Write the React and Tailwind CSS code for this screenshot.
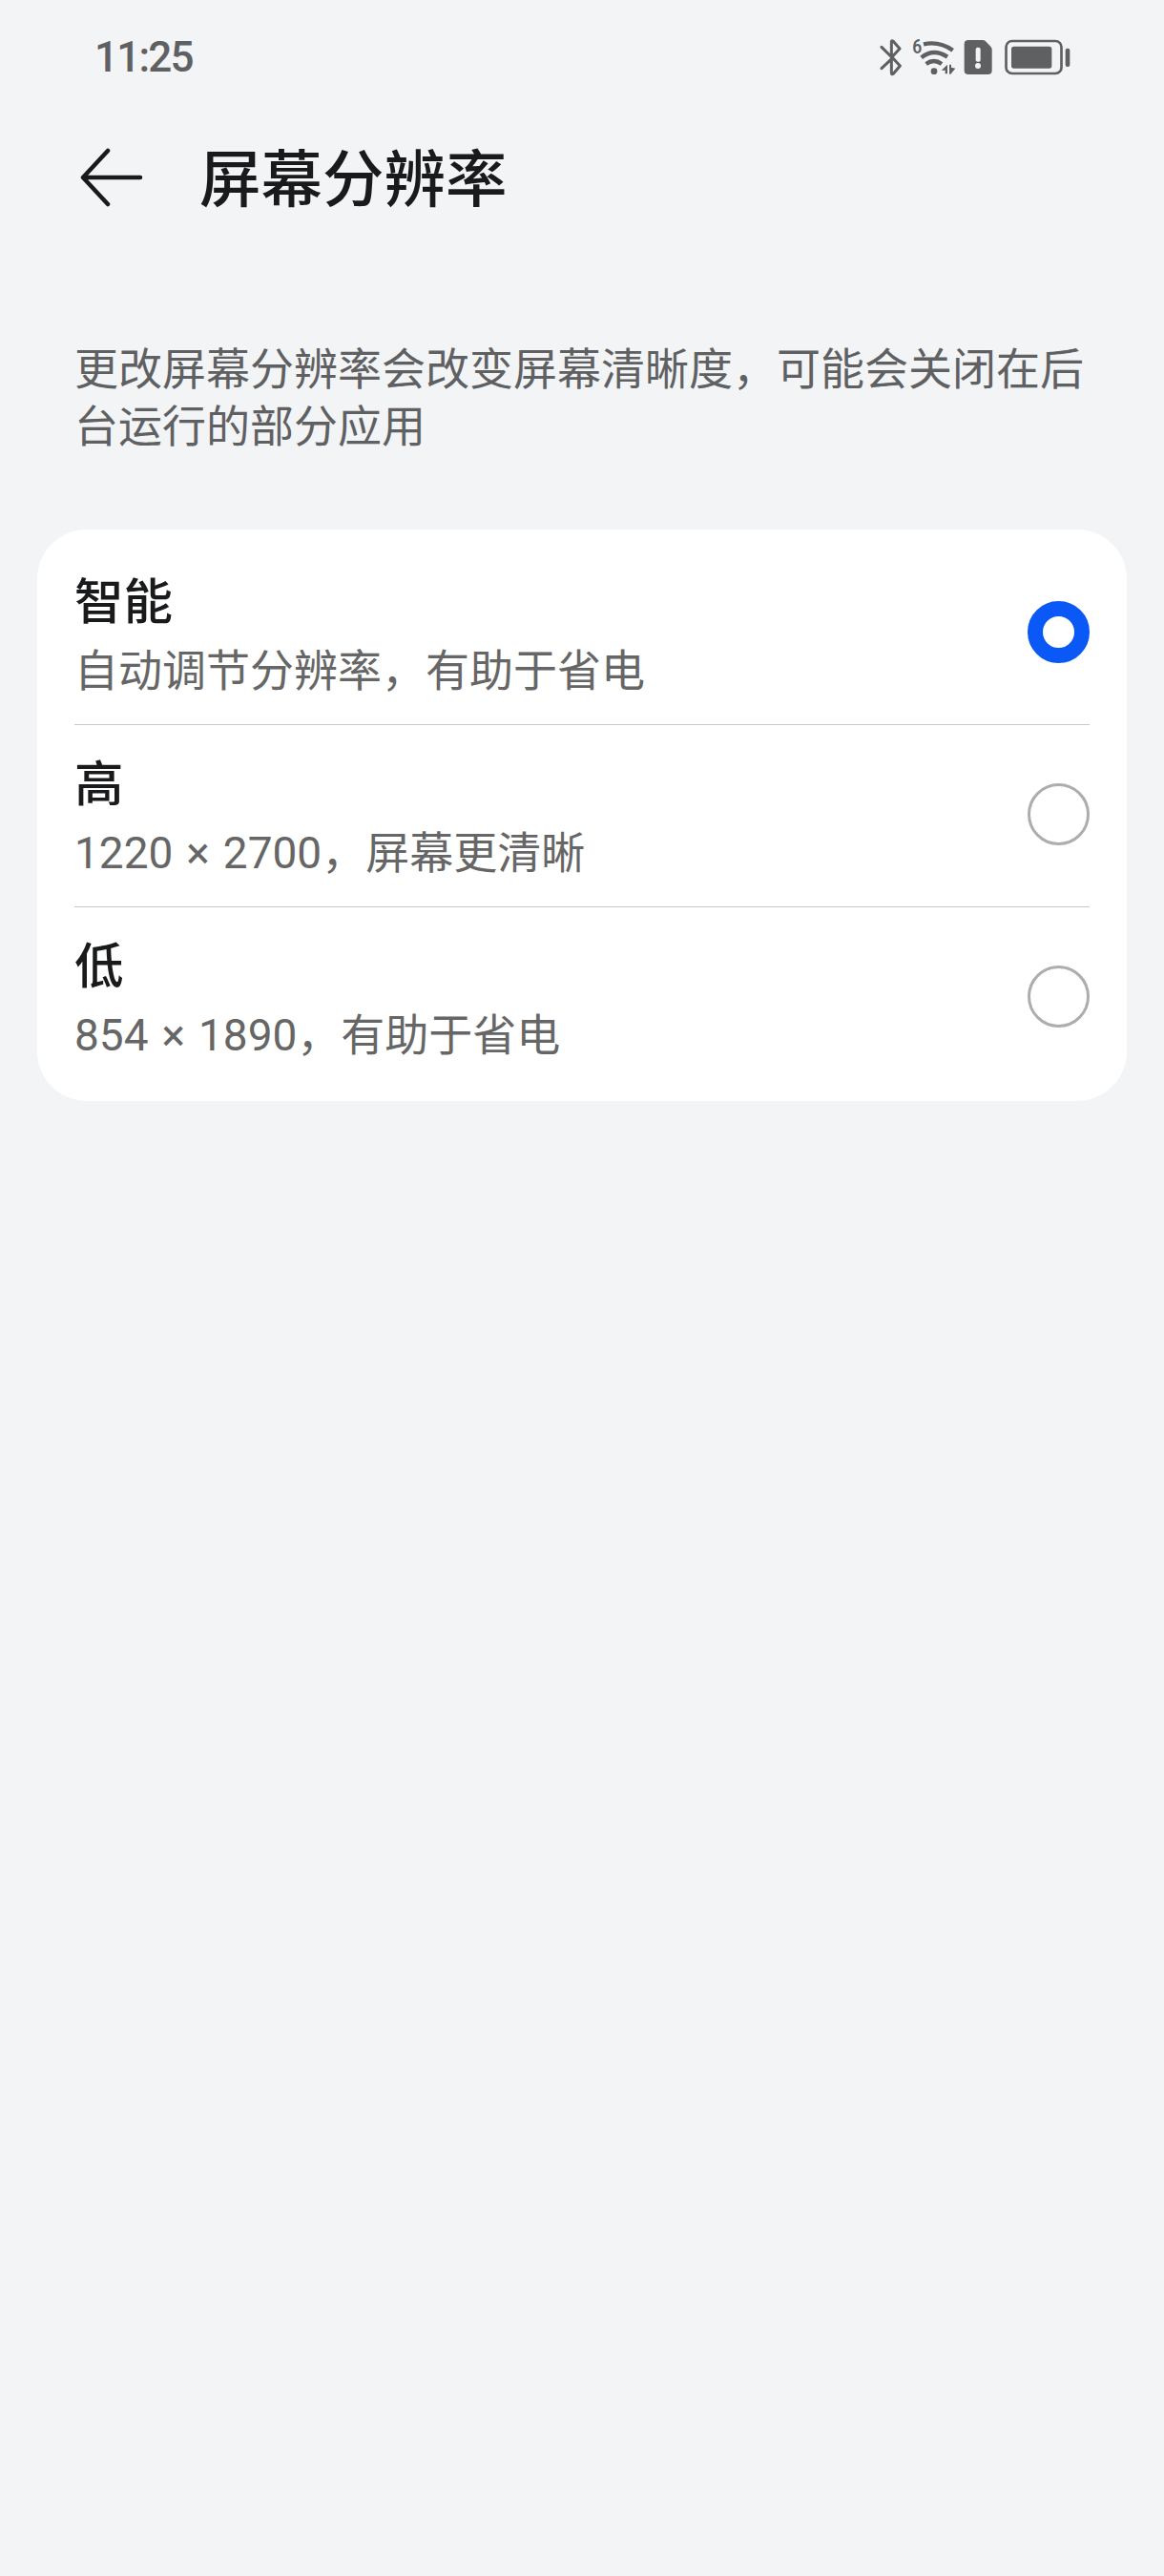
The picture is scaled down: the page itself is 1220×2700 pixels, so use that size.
import { useState } from 'react'

const options = [
    { id: 'smart', title: '智能', detail: '自动调节分辨率，有助于省电' },
    { id: 'high', title: '高', detail: '1220 × 2700，屏幕更清晰' },
    { id: 'low', title: '低', detail: '854 × 1890，有助于省电' },
]

const BluetoothIcon = () => (
    <svg className="w-[24px] h-[40px]" viewBox="0 0 72 120" fill="none" stroke="#5f6062" strokeWidth="9" strokeLinecap="round" strokeLinejoin="round">
        <path d="M6 28 L38 60 L63 33 L42 9 Q37 6 37 12 V108 Q37 116 43 112 L64 87 L41 62 L6 95" />
    </svg>
)

const WifiIcon = () => (
    <svg className="w-[46px] h-[40px] overflow-visible" viewBox="0 0 138 120" fill="none" stroke="#5f6062">
        <text x="1" y="49" fontSize="62" fontWeight="600" textLength="30" lengthAdjust="spacingAndGlyphs" fill="#5f6062" stroke="none" className="font-['Roboto',sans-serif]">6</text>
        {/* Signal arcs */}
        <path d="M36 19 Q85 8 128 38" strokeWidth="13" />
        <path d="M29 61 Q67 30 111 59" strokeWidth="13" />
        <path d="M44 81 Q68 63 93 81" strokeWidth="13" />
        <circle cx="69" cy="104" r="10" fill="#5f6062" stroke="none" />
        {/* Traffic arrows */}
        <path d="M111 83 V112 H104 V101 H92 Z M117 83 H123 V92 L136 95 L121 113 H117 Z" fill="#5f6062" stroke="none" />
    </svg>
)

const SimAlertIcon = () => (
    <svg className="w-[30px] h-[38px]" viewBox="0 0 90 114">
        <path d="M15 3 H60 Q65 3 69 7 L85 23 Q89 27 89 32 V98 Q89 111 76 111 H15 Q2 111 2 98 V16 Q2 3 15 3 Z" fill="#5f6062" />
        <rect x="38" y="26" width="15" height="45" rx="6" fill="#f2f4f6" />
        <circle cx="45" cy="84" r="9" fill="#f2f4f6" />
    </svg>
)

const BatteryIcon = () => (
    <svg className="w-[70px] h-[38px]" viewBox="0 0 210 114">
        <rect x="4.5" y="6" width="174" height="102" rx="19" fill="none" stroke="#5f6062" strokeWidth="8" />
        <rect x="21" y="23" width="127" height="69" rx="8" fill="#5f6062" />
        <rect x="191" y="29" width="14" height="58" rx="6" fill="#5f6062" />
    </svg>
)

const StatusBar = () => (
    <div className="h-[120px] pl-[99px] pr-[97px] flex justify-between items-center text-[#5f6062]">
        <span className="text-[44px] leading-[60px] font-medium tracking-[-1.8px]">11:25</span>
        <div className="flex items-center">
            <BluetoothIcon />
            <div className="ml-[10px]"><WifiIcon /></div>
            <div className="ml-[8px]"><SimAlertIcon /></div>
            <div className="ml-[13px]"><BatteryIcon /></div>
        </div>
    </div>
)

const Header = () => (
    <div className="h-[136px] pl-[84px] flex items-center text-[#191a1b]">
        <button className="-mt-[4px]">
            <svg className="w-[66px] h-[62px]" viewBox="0 0 66 62" fill="none" stroke="currentColor" strokeWidth="4.5" strokeLinecap="round" strokeLinejoin="round">
                <path d="M29 3 L3 31 L29 59 M3 31 H63" />
            </svg>
        </button>
        <h1 className="mt-[2px] ml-[59px] text-[64.5px] leading-[80px] font-medium">屏幕分辨率</h1>
    </div>
)

const OptionRow = ({ option, selected, last, onSelect }) => (
    <div onClick={() => onSelect(option.id)} className={`h-[191px] flex justify-between items-start cursor-pointer ${last ? '' : 'border-b border-[#c9c9c9]'}`}>
        <div className="pt-[27px]">
            <p className="text-[51.5px] leading-[72px] font-medium text-[#191a1b]">{option.title}</p>
            <p className="mt-[5px] text-[46px] leading-[60px] text-[#666666] [word-spacing:2.5px]">{option.detail}</p>
        </div>
        <span className={`mt-[61px] size-[65px] rounded-full bg-white ${selected ? 'border-[16px] border-[#0a59f7]' : 'border-[3px] border-[#adadad]'}`}></span>
    </div>
)

const App = () => {
    const [selected, setSelected] = useState('smart')

    return (
        <div className="w-[1220px] h-[2700px] bg-[#f2f4f6] font-['Roboto','Noto_Sans_CJK_SC',sans-serif]">
            <StatusBar />
            <Header />
            <p className="mt-[101px] px-[78px] text-[46px] leading-[60px] text-[#5f6062]">
                更改屏幕分辨率会改变屏幕清晰度，可能会关闭在后台运行的部分应用
            </p>

            {/* Resolution list */}
            <div className="mt-[78px] mx-[39px] pl-[39px] pr-[39px] pt-[14px] pb-[12px] bg-white rounded-[52px]">
                {options.map((option, i) => (
                    <OptionRow
                        key={option.id}
                        option={option}
                        selected={selected === option.id}
                        last={i === options.length - 1}
                        onSelect={setSelected}
                    />
                ))}
            </div>
        </div>
    )
}

export default App
